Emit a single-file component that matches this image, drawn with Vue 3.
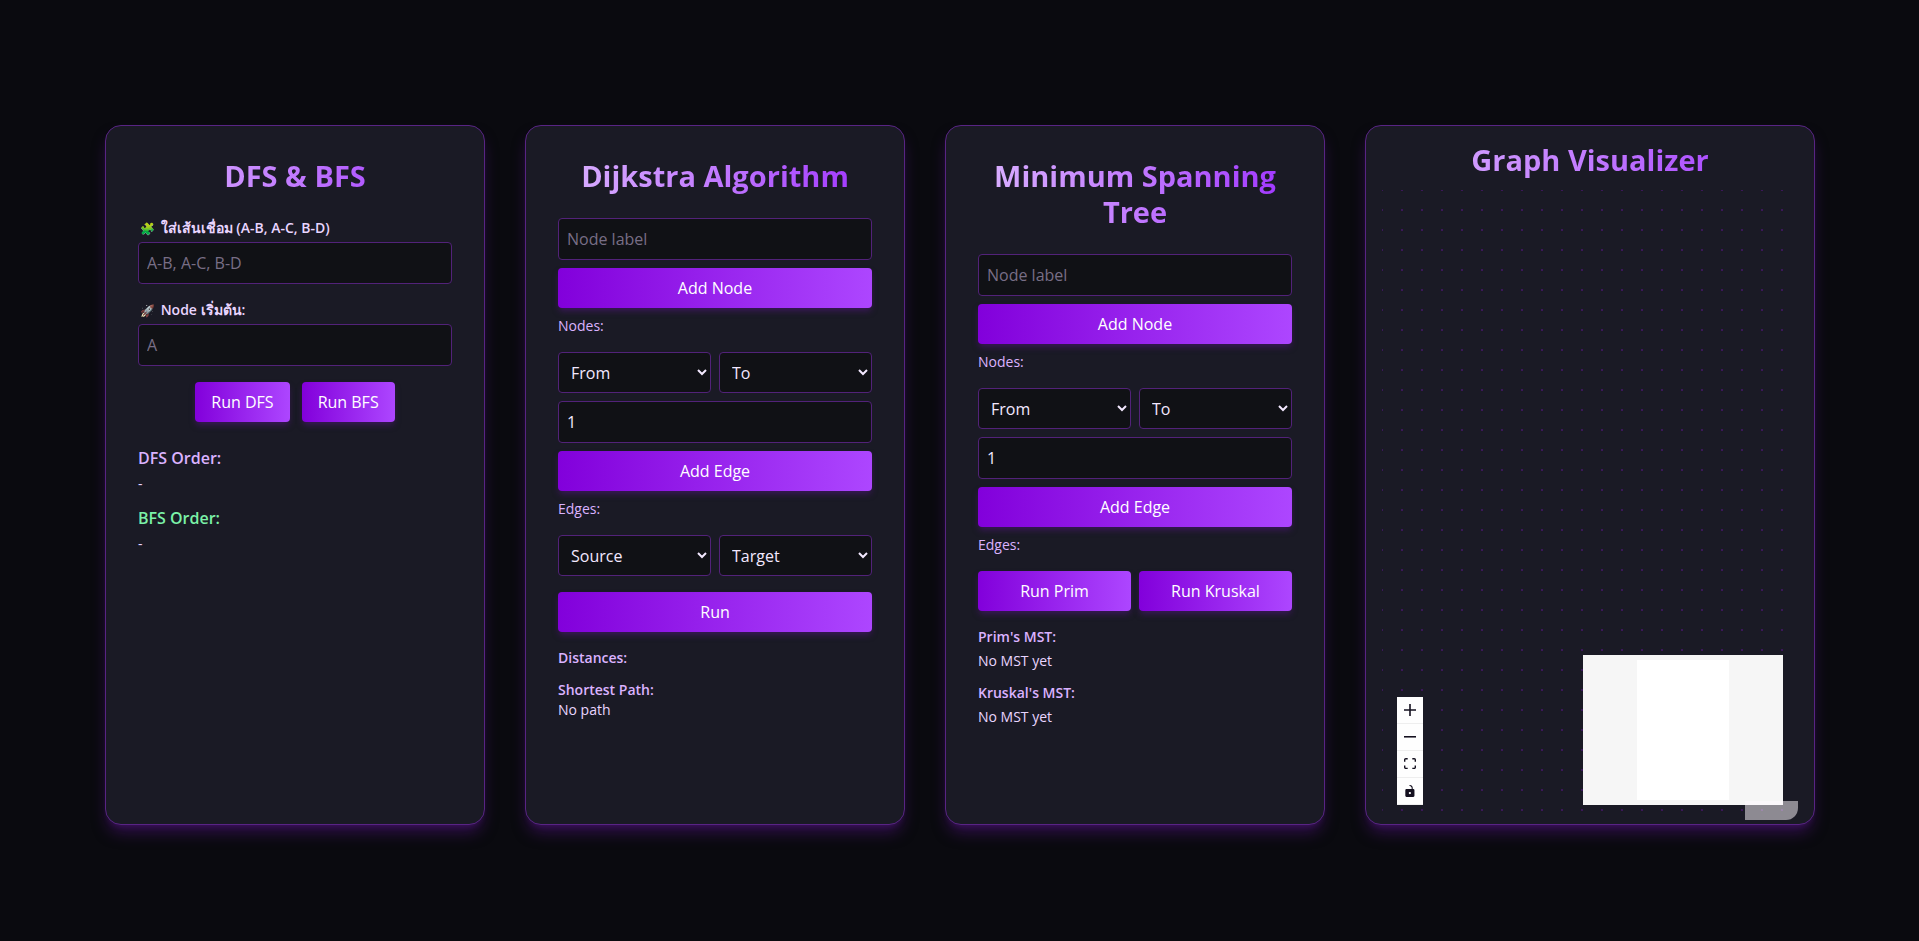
<script setup>
import { ref } from 'vue'

const edgesText = ref('')
const startNode = ref('')
const dfsOrder = ref([])
const bfsOrder = ref([])

const dijkstra = ref({ label: '', from: '', to: '', weight: 1, source: '', target: '', nodes: [], edges: [] })
const mst = ref({ label: '', from: '', to: '', weight: 1, nodes: [], edges: [] })

const path = ref([])
const primResult = ref('')
const kruskalResult = ref('')

// "A-B, A-C" -> adjacency list
const parseGraph = () => {
  const graph = {}
  edgesText.value.split(',').forEach((pair) => {
    const [a, b] = pair.split('-').map((s) => s.trim())
    if (!a || !b) return
    graph[a] = [...(graph[a] || []), b]
    graph[b] = [...(graph[b] || []), a]
  })
  return graph
}

const walk = (useStack) => {
  const graph = parseGraph()
  const open = [startNode.value.trim()]
  const seen = []
  while (open.length) {
    const node = useStack ? open.pop() : open.shift()
    if (!graph[node] || seen.includes(node)) continue
    seen.push(node)
    open.push(...(useStack ? [...graph[node]].reverse() : graph[node]))
  }
  return seen
}

const runDfs = () => { dfsOrder.value = walk(true) }
const runBfs = () => { bfsOrder.value = walk(false) }

const addNode = (g) => {
  if (!g.label.trim()) return
  g.nodes.push(g.label.trim())
  g.label = ''
}

const addEdge = (g) => {
  if (!g.from || !g.to) return
  g.edges.push(`${g.from}-${g.to} (${g.weight})`)
}
</script>

<template>
  <main class="page">
    <section class="card">
      <h2 class="title">DFS &amp; BFS</h2>
      <div class="fields">
        <div>
          <label class="label" for="edges"><span class="emoji">🧩</span> ใส่เส้นเชื่อม (A-B, A-C, B-D)</label>
          <input id="edges" v-model="edgesText" class="control" placeholder="A-B, A-C, B-D" />
        </div>
        <div>
          <label class="label" for="start"><span class="emoji pale">🚀</span> Node เริ่มต้น:</label>
          <input id="start" v-model="startNode" class="control" placeholder="A" />
        </div>
        <div class="actions">
          <button class="btn" @click="runDfs">Run DFS</button>
          <button class="btn" @click="runBfs">Run BFS</button>
        </div>
      </div>
      <div class="orders">
        <div>
          <h3 class="order">DFS Order:</h3>
          <p class="value spaced">{{ dfsOrder.join(' → ') || '-' }}</p>
        </div>
        <div>
          <h3 class="order green">BFS Order:</h3>
          <p class="value spaced">{{ bfsOrder.join(' → ') || '-' }}</p>
        </div>
      </div>
    </section>

    <section class="card">
      <h2 class="title">Dijkstra Algorithm</h2>
      <div class="stack">
        <input v-model="dijkstra.label" class="control" placeholder="Node label" aria-label="Node label" />
        <button class="btn" @click="addNode(dijkstra)">Add Node</button>
        <p class="list">Nodes: {{ dijkstra.nodes.join(', ') }}</p>
      </div>
      <div class="stack next">
        <div class="pair">
          <select v-model="dijkstra.from" class="control" aria-label="From">
            <option value="">From</option>
            <option v-for="n in dijkstra.nodes" :key="n">{{ n }}</option>
          </select>
          <select v-model="dijkstra.to" class="control" aria-label="To">
            <option value="">To</option>
            <option v-for="n in dijkstra.nodes" :key="n">{{ n }}</option>
          </select>
        </div>
        <input v-model="dijkstra.weight" class="control" type="number" aria-label="Weight" />
        <button class="btn" @click="addEdge(dijkstra)">Add Edge</button>
        <p class="list">Edges: {{ dijkstra.edges.join(', ') }}</p>
      </div>
      <div class="pair next">
        <select v-model="dijkstra.source" class="control" aria-label="Source">
          <option value="">Source</option>
          <option v-for="n in dijkstra.nodes" :key="n">{{ n }}</option>
        </select>
        <select v-model="dijkstra.target" class="control" aria-label="Target">
          <option value="">Target</option>
          <option v-for="n in dijkstra.nodes" :key="n">{{ n }}</option>
        </select>
      </div>
      <button class="btn next">Run</button>
      <div class="results">
        <h3 class="result">Distances:</h3>
        <div>
          <h3 class="result">Shortest Path:</h3>
          <p class="value">{{ path.join(' → ') || 'No path' }}</p>
        </div>
      </div>
    </section>

    <section class="card">
      <h2 class="title">Minimum Spanning Tree</h2>
      <div class="stack">
        <input v-model="mst.label" class="control" placeholder="Node label" aria-label="Node label" />
        <button class="btn" @click="addNode(mst)">Add Node</button>
        <p class="list">Nodes: {{ mst.nodes.join(', ') }}</p>
      </div>
      <div class="stack next">
        <div class="pair">
          <select v-model="mst.from" class="control" aria-label="From">
            <option value="">From</option>
            <option v-for="n in mst.nodes" :key="n">{{ n }}</option>
          </select>
          <select v-model="mst.to" class="control" aria-label="To">
            <option value="">To</option>
            <option v-for="n in mst.nodes" :key="n">{{ n }}</option>
          </select>
        </div>
        <input v-model="mst.weight" class="control" type="number" aria-label="Weight" />
        <button class="btn" @click="addEdge(mst)">Add Edge</button>
        <p class="list">Edges: {{ mst.edges.join(', ') }}</p>
      </div>
      <div class="pair next">
        <button class="btn">Run Prim</button>
        <button class="btn">Run Kruskal</button>
      </div>
      <div class="results">
        <div>
          <h3 class="result">Prim's MST:</h3>
          <p class="value spaced">{{ primResult || 'No MST yet' }}</p>
        </div>
        <div>
          <h3 class="result">Kruskal's MST:</h3>
          <p class="value spaced">{{ kruskalResult || 'No MST yet' }}</p>
        </div>
      </div>
    </section>

    <section class="card visualizer">
      <h2 class="title">Graph Visualizer</h2>
      <div class="flow">
        <div class="zoom-controls">
          <button aria-label="Zoom in">
            <svg viewBox="0 0 32 32"><path d="M32 18.133H18.133V32h-4.266V18.133H0v-4.266h13.867V0h4.266v13.867H32z" /></svg>
          </button>
          <button aria-label="Zoom out">
            <svg viewBox="0 0 32 5"><path d="M0 0h32v4.2H0z" /></svg>
          </button>
          <button aria-label="Fit view">
            <svg viewBox="0 0 32 30"><path d="M3.692 4.63c0-.53.4-.938.939-.938h5.215V0H4.708C2.13 0 0 2.054 0 4.63v5.216h3.692V4.631zM27.354 0h-5.2v3.692h5.17c.53 0 .984.4.984.939v5.215H32V4.631A4.624 4.624 0 0027.354 0zm.954 24.83c0 .532-.4.94-.939.94h-5.215v3.768h5.215c2.577 0 4.631-2.13 4.631-4.707v-5.139h-3.692v5.139zm-23.677.94c-.531 0-.939-.4-.939-.94v-5.138H0v5.139c0 2.577 2.13 4.707 4.708 4.707h5.138V25.77H4.631z" /></svg>
          </button>
          <button aria-label="Toggle interactivity">
            <svg viewBox="0 0 25 32"><path d="M21.333 10.667H19.81V7.619C19.81 3.429 16.38 0 12.19 0c-4.114 1.828-1.37 2.133.305 2.438 1.676.305 4.42 2.59 4.42 5.181v3.048H3.047A3.056 3.056 0 000 13.714v15.238A3.056 3.056 0 003.048 32h18.285a3.056 3.056 0 003.048-3.048V13.714a3.056 3.056 0 00-3.048-3.047zM12.19 24.533a3.056 3.056 0 01-3.047-3.047 3.056 3.056 0 013.047-3.048 3.056 3.056 0 013.048 3.048 3.056 3.056 0 01-3.048 3.047z" /></svg>
          </button>
        </div>
        <svg class="minimap" viewBox="0 0 200 150" role="img" aria-label="Mini map">
          <path d="M0 0h200v150H0zM54 5v140h92V5z" fill="#f6f6f6" fill-rule="evenodd" />
        </svg>
        <div class="attribution"></div>
      </div>
    </section>
  </main>
</template>

<style>
body {
  background: #0a0a0f;
}
</style>

<style scoped>
* {
  box-sizing: border-box;
  margin: 0;
}

.page {
  display: grid;
  grid-template-columns: 38fr 38fr 38fr 45fr;
  gap: 40px;
  min-height: 100vh;
  padding: 125px 104px 116px 105px;
  color: #e9d5ff;
  font-family: "Segoe UI", "Open Sans", "Noto Sans", sans-serif;
  font-size: 16px;
  line-height: 24px;
}

.card {
  display: flex;
  flex-direction: column;
  padding: 32px;
  background: #1a1a25;
  border: 1px solid #582484;
  border-radius: 16px;
  box-shadow: 0 10px 15px -3px rgba(89, 22, 139, 0.5), 0 4px 6px -4px rgba(89, 22, 139, 0.5);
}

.title {
  margin-bottom: 24px;
  background: linear-gradient(to right, #dab2ff, #c27aff, #9f33ff);
  background-clip: text;
  color: transparent;
  font-size: 29px;
  font-weight: 700;
  line-height: 36px;
  text-align: center;
}

.fields {
  display: flex;
  flex-direction: column;
  gap: 16px;
}

.label {
  display: block;
  height: 20px;
  margin-bottom: 4px;
  font-size: 14px;
  font-weight: 600;
  line-height: 20px;
}

.emoji {
  margin: 0 2px;
  font-size: 12px;
}

.pale {
  filter: saturate(0.4);
}

.control {
  display: block;
  width: 100%;
  height: 42px;
  padding: 8px;
  background: #101115;
  border: 1px solid #522279;
  border-radius: 4px;
  color: #f3e8ff;
  font: inherit;
}

.control::placeholder {
  color: #786e86;
  opacity: 1;
}

select.control {
  height: 41px;
}

.btn {
  height: 40px;
  padding: 8px 16px;
  background: linear-gradient(to right, #8200db, #ad46ff);
  border: 0;
  border-radius: 4px;
  box-shadow: 0 4px 6px -1px rgba(89, 22, 139, 0.5);
  color: #fff;
  font: inherit;
  cursor: pointer;
}

.actions {
  display: flex;
  justify-content: center;
  gap: 12px;
}

.stack {
  display: flex;
  flex-direction: column;
  gap: 8px;
}

.pair {
  display: grid;
  grid-template-columns: 1fr 1fr;
  gap: 8px;
}

.next {
  margin-top: 16px;
}

.list,
.value,
.result {
  font-size: 14px;
  line-height: 20px;
}

.list,
.result,
.order {
  color: #dab2ff;
}

.result,
.order {
  font-weight: 600;
}

.order {
  font-size: 16px;
}

.green {
  color: #7bf1a8;
}

.spaced {
  margin-top: 4px;
}

.orders {
  display: flex;
  flex-direction: column;
  gap: 12px;
  margin-top: 24px;
}

.results {
  display: flex;
  flex-direction: column;
  gap: 12px;
  margin-top: 16px;
}

.visualizer {
  padding: 16px 16px 4px;
}

.visualizer .title {
  margin-bottom: 12px;
}

.flow {
  position: relative;
  flex: 1;
  overflow: hidden;
  background: radial-gradient(circle, #3b1759 1px, transparent 1px) -10px -10px / 20px 20px;
  border-radius: 0 0 12px 12px;
}

.zoom-controls {
  position: absolute;
  bottom: 15px;
  left: 15px;
  display: flex;
  flex-direction: column;
}

.zoom-controls button {
  display: flex;
  align-items: center;
  justify-content: center;
  width: 26px;
  height: 27px;
  padding: 0;
  background: #fefefe;
  border: 0;
  border-bottom: 1px solid #eee;
  cursor: pointer;
}

.zoom-controls svg {
  width: 12px;
  max-height: 12px;
  fill: #14101f;
}

.minimap {
  position: absolute;
  right: 15px;
  bottom: 15px;
  width: 200px;
  height: 150px;
  background: #fff;
}

.attribution {
  position: absolute;
  right: 0;
  bottom: 0;
  width: 53px;
  height: 19px;
  background: rgba(255, 250, 255, 0.5);
}
</style>
